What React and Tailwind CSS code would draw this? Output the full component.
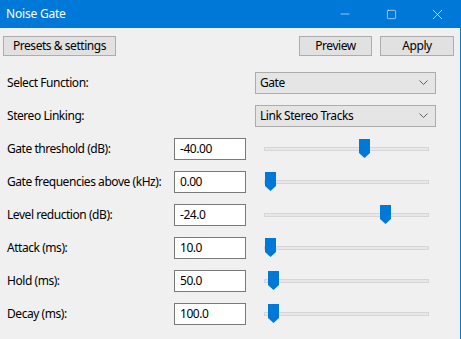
import { Minus, Square, X } from 'lucide-react'

const rows = [
  { label: 'Gate threshold (dB):', value: '-40.00', thumb: 95 },
  { label: 'Gate frequencies above (kHz):', value: '0.00', thumb: 1 },
  { label: 'Level reduction (dB):', value: '-24.0', thumb: 116 },
  { label: 'Attack (ms):', value: '10.0', thumb: 1 },
  { label: 'Hold (ms):', value: '50.0', thumb: 4 },
  { label: 'Decay (ms):', value: '100.0', thumb: 4 },
]

function Chevron() {
  return (
    <svg width="9" height="6" viewBox="0 0 9 6" className="shrink-0">
      <path d="M0.5 0.5 L4.5 4.5 L8.5 0.5" fill="none" stroke="#606060" strokeWidth="1" />
    </svg>
  )
}

function Combo({ text }) {
  return (
    <div className="ml-auto mr-[24px] w-[181px] h-[22px] bg-[#e5e5e5] border border-[#acacac] flex items-center justify-between pl-[4px] pr-[7px]">
      <span>{text}</span>
      <Chevron />
    </div>
  )
}

function Slider({ thumb }) {
  return (
    <div className="relative ml-[18px] w-[165px] h-[22px] flex items-center">
      <div className="w-full h-[4px] bg-[#e7e7e7] border border-[#d6d6d6]" />
      <svg width="11" height="19" viewBox="0 0 11 19" className="absolute top-[1px]" style={{ left: thumb }}>
        <path d="M0 0H11V14L5.5 19L0 14Z" fill="#0078d7" />
      </svg>
    </div>
  )
}

export default function App() {
  return (
    <div className="w-[461px] h-[339px] bg-[#f0f0f0] border-r border-[#0078d7] overflow-hidden text-[12px] tracking-[-0.45px] text-black whitespace-nowrap" style={{ fontFamily: '"Noto Sans", "Open Sans", sans-serif' }}>
      <div className="h-[28px] bg-[#0078d7] flex items-center text-white">
        <span className="pl-[6px] flex-1 tracking-[-0.2px]">Noise Gate</span>
        <div className="flex items-center h-full">
          <div className="w-[46px] flex justify-center"><Minus size={14} strokeWidth={1} /></div>
          <div className="w-[46px] flex justify-center"><Square size={11} strokeWidth={1.3} /></div>
          <div className="w-[46px] flex justify-center"><X size={17} strokeWidth={1} /></div>
        </div>
      </div>

      <div className="flex items-center pt-[8px] pl-[3px] pr-[6px]">
        <button className="w-[113px] h-[20px] bg-[#e1e1e1] border border-[#adadad]">Presets &amp; settings</button>
        <button className="ml-auto w-[73px] h-[20px] bg-[#e1e1e1] border border-[#adadad]">Preview</button>
        <button className="ml-[8px] w-[74px] h-[20px] bg-[#e1e1e1] border border-[#adadad]">Apply</button>
      </div>

      <div className="flex flex-col gap-[11px] pt-[16px] pl-[7px]">
        <div className="flex items-center h-[22px]">
          <span>Select Function:</span>
          <Combo text="Gate" />
        </div>
        <div className="flex items-center h-[22px]">
          <span>Stereo Linking:</span>
          <Combo text="Link Stereo Tracks" />
        </div>
        {rows.map(r => (
          <div key={r.label} className="flex items-center h-[22px]">
            <span className="w-[167px] shrink-0">{r.label}</span>
            <div className="w-[72px] h-[22px] bg-white border border-[#7a7a7a] flex items-center pl-[5px]">{r.value}</div>
            <Slider thumb={r.thumb} />
          </div>
        ))}
      </div>
    </div>
  )
}
